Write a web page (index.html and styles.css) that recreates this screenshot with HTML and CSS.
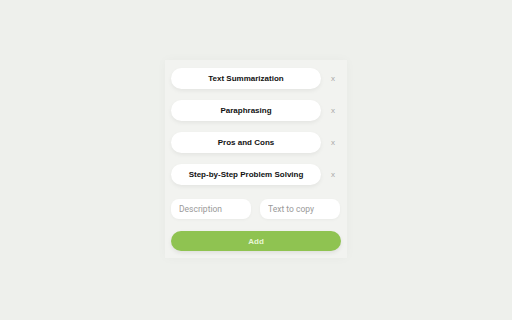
FILE: index.html
```html
<!DOCTYPE html>
<html lang="en">
<head>
  <meta charset="UTF-8" />
  <title>Prompt Snippets</title>
  <link rel="stylesheet" href="styles.css">
</head>
<body>
  <div class="panel">
    <div class="snippet-list">
      <div class="snippet-row">
        <button class="snippet">Text Summarization</button>
        <button class="remove">x</button>
      </div>
      <div class="snippet-row">
        <button class="snippet">Paraphrasing</button>
        <button class="remove">x</button>
      </div>
      <div class="snippet-row">
        <button class="snippet">Pros and Cons</button>
        <button class="remove">x</button>
      </div>
      <div class="snippet-row">
        <button class="snippet">Step-by-Step Problem Solving</button>
        <button class="remove">x</button>
      </div>
    </div>

    <div class="add-form">
      <div class="inputs">
        <input type="text" placeholder="Description" />
        <input type="text" placeholder="Text to copy" />
      </div>
      <button class="add-button">Add</button>
    </div>
  </div>
</body>
</html>
```

FILE: styles.css
```css
* {
  margin: 0;
  padding: 0;
  box-sizing: border-box;
}

body {
  font-family: 'Liberation Sans', Arial, sans-serif;
  background: #eef0ec;
  width: 512px;
  height: 320px;
  display: flex;
  justify-content: center;
  padding-top: 60px;
}

.panel {
  width: 182px;
  height: 198px;
  padding: 8px 6px;
  background: #f2f3f0;
  box-shadow: 0 0 10px rgba(0, 0, 0, 0.03);
  display: flex;
  flex-direction: column;
}

.snippet-list {
  display: flex;
  flex-direction: column;
  gap: 11px;
}

.snippet-row {
  display: flex;
  align-items: center;
}

.snippet {
  flex-shrink: 0;
  width: 150px;
  height: 21px;
  border: none;
  border-radius: 11px;
  background: #ffffff;
  font-family: inherit;
  font-size: 8px;
  font-weight: 700;
  color: #111;
  box-shadow: 0 2px 4px rgba(0, 0, 0, 0.06);
  cursor: pointer;
}

.remove {
  flex-shrink: 0;
  width: 20px;
  height: 20px;
  margin-left: 2px;
  border: none;
  background: transparent;
  color: #a8a8a8;
  font-family: inherit;
  font-size: 8px;
  cursor: pointer;
}

.add-form {
  margin-top: 14px;
  display: flex;
  flex-direction: column;
  gap: 12px;
}

.inputs {
  display: flex;
  gap: 9px;
}

.inputs input {
  width: 80px;
  height: 20px;
  padding: 0 8px;
  border: none;
  border-radius: 8px;
  background: #ffffff;
  font-family: 'Roboto', sans-serif;
  font-size: 8.5px;
  outline: none;
  box-shadow: 0 1px 3px rgba(0, 0, 0, 0.04);
}

.inputs input::placeholder {
  color: #9a9a9a;
}

.add-button {
  width: 170px;
  height: 20px;
  border: none;
  border-radius: 10px;
  background: #8fc351;
  color: #e8f6d6;
  font-family: inherit;
  font-size: 8px;
  font-weight: 700;
  box-shadow: 0 2px 4px rgba(0, 0, 0, 0.08);
  cursor: pointer;
}
```
